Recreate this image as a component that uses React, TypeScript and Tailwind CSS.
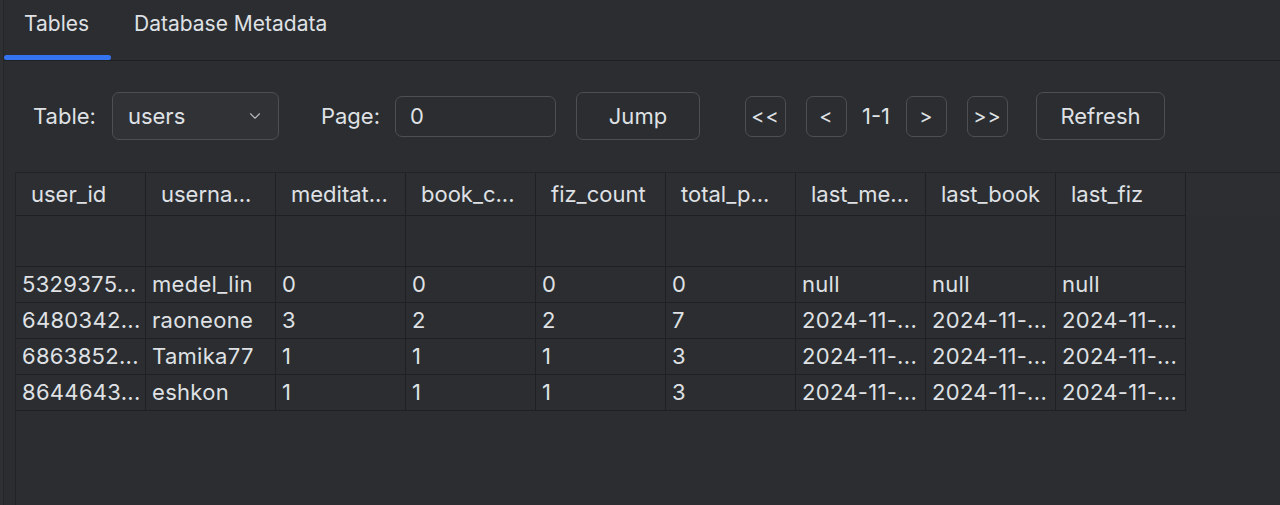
import { ChevronDown } from "lucide-react"

const columns = [
  "user_id",
  "userna...",
  "meditat...",
  "book_c...",
  "fiz_count",
  "total_p...",
  "last_me...",
  "last_book",
  "last_fiz",
]

const rows: string[][] = [
  ["5329375...", "medel_lin", "0", "0", "0", "0", "null", "null", "null"],
  ["6480342...", "raoneone", "3", "2", "2", "7", "2024-11-...", "2024-11-...", "2024-11-..."],
  ["6863852...", "Tamika77", "1", "1", "1", "3", "2024-11-...", "2024-11-...", "2024-11-..."],
  ["8644643...", "eshkon", "1", "1", "1", "3", "2024-11-...", "2024-11-...", "2024-11-..."],
]

function SmallButton({ label, className = "" }: { label: string; className?: string }) {
  return (
    <button
      className={`flex h-[41px] w-[41px] items-center justify-center rounded-[7px] border border-[#4d4f54] text-[20px] tracking-[1px] text-[#dfe1e5] ${className}`}
    >
      {label}
    </button>
  )
}

export default function App() {
  return (
    <div
      className="flex h-[505px] w-[1280px] overflow-hidden bg-[#2b2d30] text-[#dfe1e5]"
      style={{ fontFamily: "Inter, 'Noto Sans', sans-serif" }}
    >
      <div className="w-[4px] shrink-0 border-r border-[#25262a] bg-[#2e3034]" />
      <div className="flex min-w-0 flex-1 flex-col">
        {/* tabs */}
        <div className="flex h-[61px] shrink-0 border-b border-[#1f2023]">
          <div className="flex w-[107px] flex-col justify-between">
            <span className="pl-[20px] pt-[11px] text-[21px] leading-[26px]">Tables</span>
            <div className="h-[5px] rounded-full bg-[#3574f0]" />
          </div>
          <div className="flex flex-col">
            <span className="pl-[23px] pt-[11px] text-[21px] leading-[26px]">Database Metadata</span>
          </div>
        </div>

        {/* toolbar */}
        <div className="mt-[31px] flex h-[48px] shrink-0 items-center text-[22px]">
          <span className="ml-[29px]">Table:</span>
          <div className="ml-[16px] flex h-[48px] w-[167px] items-center justify-between rounded-[7px] border border-[#4d4f54] bg-[#313236] pl-[15px] pr-[14px]">
            <span>users</span>
            <ChevronDown size={18} strokeWidth={1.5} className="text-[#b4b6ba]" />
          </div>
          <span className="ml-[42px]">Page:</span>
          <div className="ml-[15px] flex h-[41px] w-[161px] items-center rounded-[7px] border border-[#4d4f54] pl-[14px]">
            0
          </div>
          <button className="ml-[20px] flex h-[48px] w-[124px] items-center justify-center rounded-[7px] border border-[#4d4f54]">
            Jump
          </button>
          <SmallButton label="<<" className="ml-[45px]" />
          <SmallButton label="<" className="ml-[20px]" />
          <span className="ml-[15px] w-[30px] whitespace-nowrap">1-1</span>
          <SmallButton label=">" className="ml-[14px]" />
          <SmallButton label=">>" className="ml-[20px]" />
          <button className="ml-[28px] flex h-[48px] w-[129px] items-center justify-center rounded-[7px] border border-[#4d4f54]">
            Refresh
          </button>
        </div>

        {/* table */}
        <div className="ml-[11px] mt-[32px] flex flex-1 flex-col border-l border-t border-[#222327] bg-[#2b2d30] text-[22px]">
          <div className="flex h-[43px] shrink-0 bg-[#2d2e32]">
            {columns.map((c) => (
              <div
                key={c}
                className="flex w-[130px] shrink-0 items-center overflow-hidden whitespace-nowrap border-b border-r border-[#1f2023] pl-[15px]"
              >
                {c}
              </div>
            ))}
          </div>
          <div className="flex h-[51px] shrink-0">
            {columns.map((c) => (
              <div key={c} className="w-[130px] shrink-0 border-b border-r border-[#1f2023]" />
            ))}
          </div>
          {rows.map((row, i) => (
            <div key={i} className="flex h-[36px] shrink-0">
              {row.map((v, j) => (
                <div
                  key={j}
                  className="flex w-[130px] shrink-0 items-center overflow-hidden whitespace-nowrap border-b border-r border-[#1f2023] pl-[6px] tracking-[0.3px]"
                >
                  {v}
                </div>
              ))}
            </div>
          ))}
        </div>
      </div>
    </div>
  )
}
